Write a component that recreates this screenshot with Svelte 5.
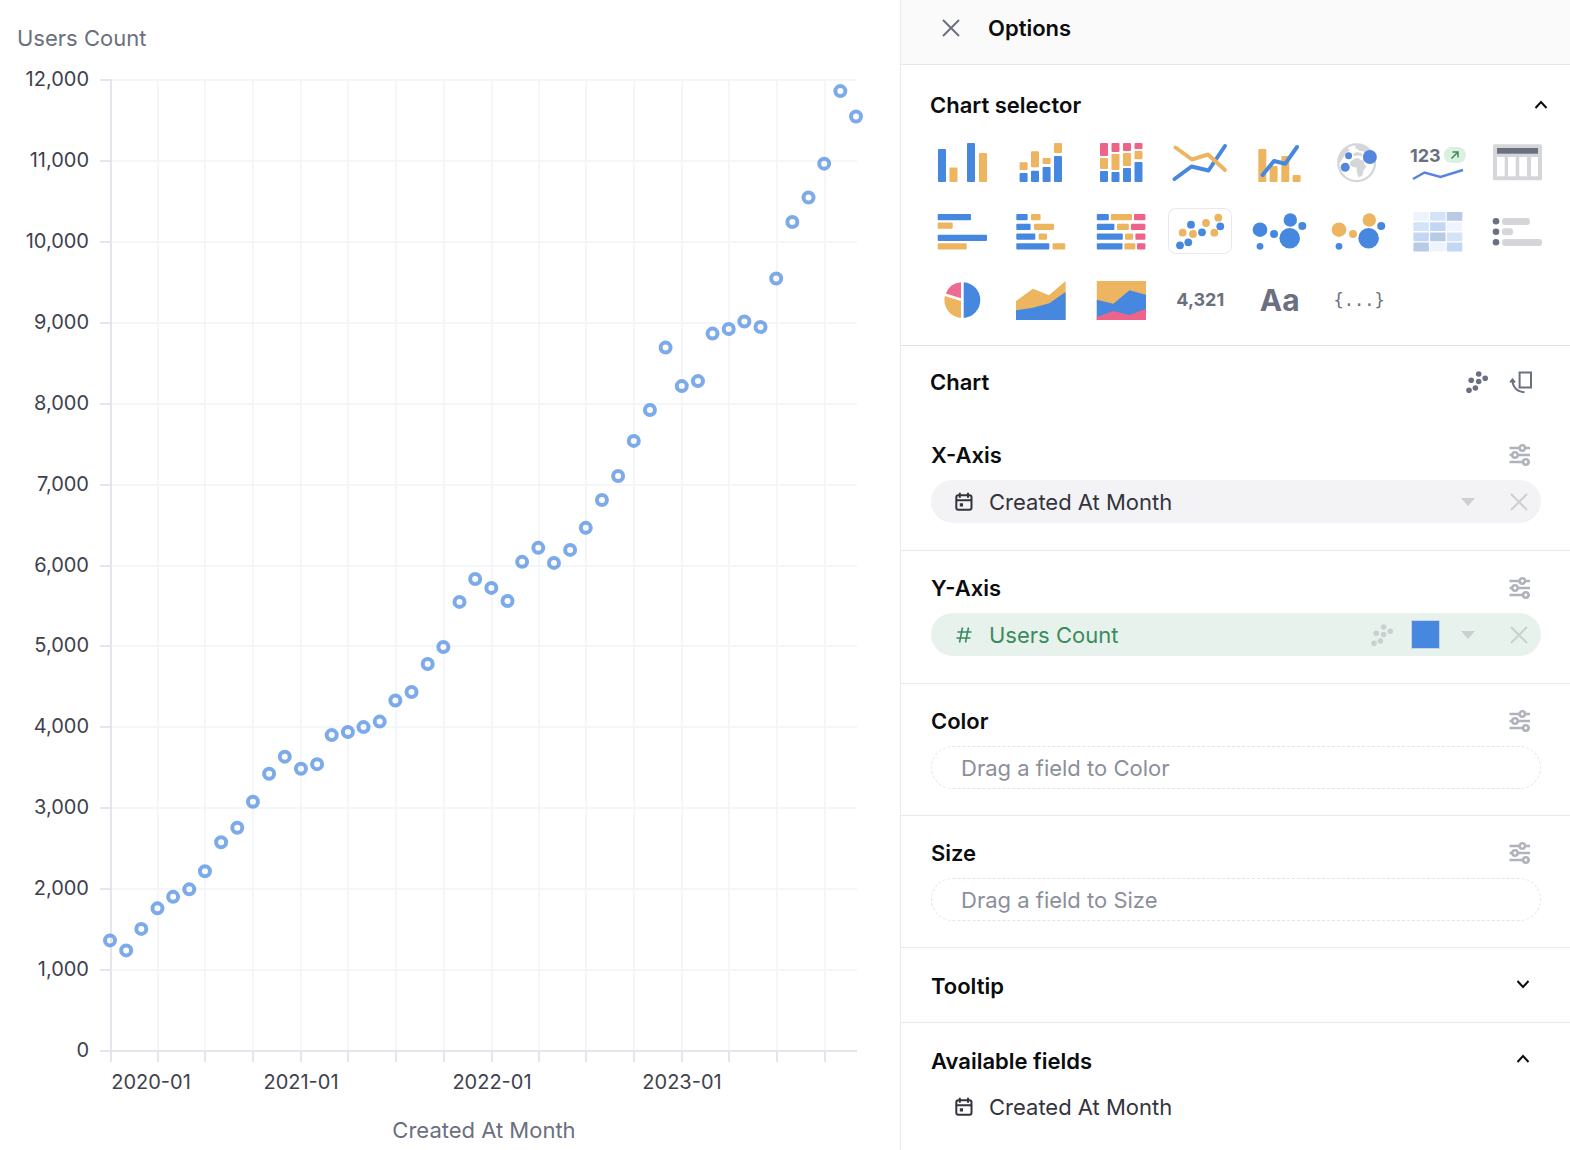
<script>
  const MONTHLY_USERS = [
    1367, 1243, 1509, 1763, 1905, 1998, 2221, 2580, 2759, 3081, 3427, 3638,
    3489, 3545, 3904, 3941, 4003, 4071, 4331, 4436, 4782, 4993, 5550, 5834,
    5723, 5562, 6045, 6218, 6032, 6193, 6465, 6810, 7107, 7540, 7922, 8693,
    8217, 8279, 8866, 8922, 9015, 8947, 9547, 10246, 10547, 10966, 11863, 11548
  ];

  const plot = { left: 110, right: 856, top: 80, bottom: 1051 };
  const start = Date.UTC(2020, 0, 1);
  const end = Date.UTC(2023, 11, 1);

  function monthX(month) {
    const t = Date.UTC(2020, month, 1);
    return plot.left + ((t - start) / (end - start)) * (plot.right - plot.left);
  }

  function valueY(value) {
    return plot.bottom - (value / 12000) * (plot.bottom - plot.top);
  }

  const points = MONTHLY_USERS.map((value, i) => ({ x: monthX(i), y: valueY(value) }));
  const yTicks = Array.from({ length: 13 }, (_, i) => i * 1000);
  const xTicks = Array.from({ length: 16 }, (_, i) => Math.floor(monthX(i * 3)) + 1);
  const xLabels = [
    { text: '2020-01', x: 151 },
    { text: '2021-01', x: 301 },
    { text: '2022-01', x: 492 },
    { text: '2023-01', x: 682 }
  ];

  const B = '#4688df';
  const O = '#edb55f';
  const P = '#ed6389';

  // rects are [x, y, width, height, color], dots are [x, y, radius, color]
  const charts = [
    { name: 'Column', rects: [[8, 10, 8, 33, B], [19.5, 28.5, 8, 14.5, O], [37, 4, 8, 39, B], [49, 14, 8, 29, O]] },
    {
      name: 'Stacked column',
      rects: [
        [10.6, 34, 8, 9, B], [22, 31.7, 8, 11.3, B], [33.6, 28, 8, 15, B], [45, 17, 8, 26, B],
        [10.6, 23.3, 8, 7.7, O], [22, 12.3, 8, 16, O], [33.6, 19, 8, 6, O], [45, 4, 8, 10, O]
      ]
    },
    {
      name: 'Stacked percentage column',
      rects: [
        [11, 32, 8, 11, B], [22.5, 33, 8, 10, B], [34, 29, 8, 14, B], [45.5, 23, 8, 20, B],
        [11, 19, 8, 11, O], [22.5, 15, 8, 16, O], [34, 14, 8, 13, O], [45.5, 12, 8, 8.3, O],
        [11, 4, 8, 13, P], [22.5, 4, 8, 9, P], [34, 4, 8, 8, P], [45.5, 4, 8, 6, P]
      ]
    },
    {
      name: 'Line',
      lines: [
        ['6.5 40 23.5 27.5 40.5 31.5 57 7', B],
        ['7.5 8.5 24 20.5 40 15.5 57 31', O]
      ]
    },
    {
      name: 'Column and line',
      rects: [[10.3, 10, 8, 33, O], [21.6, 27, 8, 16, O], [33.3, 17, 8, 26, O], [44.6, 36, 8, 7, O]],
      lines: [['14.6 36 26 22 37.3 24.7 49 8', B]]
    },
    { name: 'Map', kind: 'globe' },
    { name: 'KPI with trend', kind: 'kpi' },
    { name: 'Table', kind: 'table' },
    { name: 'Bar', rects: [[7.7, 6, 33.3, 6.3, B], [7.7, 14.5, 15, 6.3, O], [7.7, 26.8, 49.3, 6.3, B], [7.7, 35.3, 29, 6.3, O]] },
    {
      name: 'Stacked bar',
      rects: [
        [7.3, 6, 11.3, 6.3, B], [22, 6, 9.6, 6.3, O],
        [7.3, 15.8, 14.3, 6.3, B], [25, 15.8, 20, 6.3, O],
        [7.3, 25.5, 19, 6.3, B], [29.6, 25.5, 8.4, 6.3, O],
        [7.3, 35.3, 33, 6.3, B], [43.6, 35.3, 12.7, 6.3, O]
      ]
    },
    {
      name: 'Stacked percentage bar',
      rects: [
        [7.8, 6, 12, 6.3, B], [21.8, 6, 21.2, 6.3, O], [45, 6, 11.4, 6.3, P],
        [7.8, 15.8, 17.6, 6.3, B], [28, 15.8, 11.8, 6.3, O], [42, 15.8, 14.4, 6.3, P],
        [7.8, 25.5, 26, 6.3, B], [36, 25.5, 8, 6.3, O], [46.4, 25.5, 10, 6.3, P],
        [7.8, 35.3, 25.7, 6.3, B], [35.4, 35.3, 11, 6.3, O], [48, 35.3, 8.4, 6.3, P]
      ]
    },
    {
      name: 'Scatter',
      dots: [
        [12, 37.3, 3.9, B], [20.3, 34.3, 3.9, B], [23, 16.7, 3.9, B], [34, 24.3, 3.9, B], [52.3, 18.3, 3.9, B],
        [14.7, 24.7, 3.9, O], [25, 26, 3.9, O], [38, 15, 3.9, O], [46.3, 24.7, 3.9, O], [50.3, 9.7, 3.9, O]
      ]
    },
    {
      name: 'Bubble',
      dots: [
        [12, 21.7, 7.3, B], [12, 38.3, 3.4, B], [26, 26, 4, B],
        [42.3, 12, 6.7, B], [41.7, 30.3, 10.3, B], [54.3, 18, 4, B]
      ]
    },
    {
      name: 'Grouped bubble',
      dots: [
        [12, 21.7, 7.3, O], [12, 38.3, 3.4, B], [26, 26, 4, O],
        [42.3, 12, 6.7, O], [41.6, 30.3, 10.3, B], [54.2, 18, 4, B]
      ]
    },
    { name: 'Heatmap', kind: 'heatmap' },
    {
      name: 'List',
      dots: [[10, 13.3, 3.3, '#6b7080'], [10, 23.7, 3.3, '#6b7080'], [10, 34.3, 3.3, '#6b7080']],
      pills: [[16, 10, 28], [16, 20.3, 11], [16, 31, 40]]
    },
    { name: 'Pie', kind: 'pie' },
    {
      name: 'Area',
      areas: [
        ['7 43 7 24 24 11.7 40 18.3 56.6 4 56.6 43', O],
        ['7 43 7 33.3 24 30.7 40.3 26.3 56.6 15 56.6 43', B]
      ]
    },
    {
      name: 'Percentage area',
      areas: [
        ['7.8 4 57 4 57 43 7.8 43', O],
        ['7.8 43 7.8 22.7 24.4 26.7 40.4 13.3 57 17.7 57 43', B],
        ['7.8 43 7.8 40 24.4 34 40.4 38 57 31.7 57 43', P]
      ]
    },
    { name: 'Big number', kind: 'number', label: '4,321' },
    { name: 'Text', kind: 'text', label: 'Aa' },
    { name: 'Custom', kind: 'code', label: '{...}' }
  ];

  const heat = [
    ['#edf4fd', '#d3e4f8', '#b9cae5'],
    ['#d3e4f8', '#c3d7f4', '#edf4fd'],
    ['#c3d7f4', '#b9cae5', '#d3e4f8'],
    ['#b9cae5', '#edf4fd', '#c3d7f4']
  ];

  let selected = $state('Scatter');
  let selectorOpen = $state(true);
  let tooltipOpen = $state(false);
  let fieldsOpen = $state(true);
</script>

{#snippet chevron(open)}
  <svg class="chevron" width="14" height="10" viewBox="0 0 14 10" aria-hidden="true">
    <path d={open ? 'M1.5 8 7 2l5.5 6' : 'M1.5 2 7 8l5.5-6'} />
  </svg>
{/snippet}

{#snippet scatterIcon()}
  <svg width="24" height="24" viewBox="0 0 24 24" fill="currentColor" aria-hidden="true">
    <circle cx="13.7" cy="4" r="2.8" />
    <circle cx="20.2" cy="8.3" r="2.8" />
    <circle cx="6.2" cy="10.3" r="2.8" />
    <circle cx="13.7" cy="11.5" r="2.8" />
    <circle cx="10.4" cy="18" r="2.8" />
    <circle cx="4" cy="20.2" r="2.8" />
  </svg>
{/snippet}

{#snippet calendarIcon()}
  <svg class="field-icon" width="20" height="20" viewBox="0 0 20 20" aria-hidden="true">
    <rect x="2.3" y="3.3" width="15.2" height="14.4" rx="2" />
    <path d="M2.3 8.3h15.2M5.8.8v5M14 .8v5" />
    <rect x="6.3" y="11.8" width="2.2" height="2.2" fill="currentColor" stroke-width="1" />
  </svg>
{/snippet}

{#snippet settings(label)}
  <button class="settings" aria-label="{label} settings">
    <svg width="24" height="24" viewBox="0 0 24 24" aria-hidden="true">
      <path d="M1.5 5h10M17 5h5M1.5 12h3M10 12h12M1.5 19h13.500M20.500 19h1.500" />
      <circle cx="14.3" cy="5" r="2.7" />
      <circle cx="7" cy="12" r="2.7" />
      <circle cx="17.8" cy="19" r="2.7" />
    </svg>
  </button>
{/snippet}

{#snippet fieldEnd(label)}
  <button class="menu" aria-label="{label} menu">
    <svg width="14" height="8" viewBox="0 0 14 8" aria-hidden="true"><path d="M0 0h14L7 8z" fill="currentColor" /></svg>
  </button>
  <button class="remove" aria-label="Remove {label}">
    <svg width="18" height="18" viewBox="0 0 18 18" aria-hidden="true">
      <path d="M1 1l16 16M17 1 1 17" stroke="currentColor" stroke-width="2" />
    </svg>
  </button>
{/snippet}

<div class="explorer">
  <main>
    <svg class="chart" viewBox="0 0 900 1150" role="img" aria-label="Users Count by Created At Month">
      <g class="grid">
        {#each yTicks.slice(1) as tick}
          <line x1={plot.left + 1} x2={plot.right + 1} y1={Math.round(valueY(tick))} y2={Math.round(valueY(tick))} />
        {/each}
        {#each xTicks.slice(1) as x}
          <line x1={x} x2={x} y1={plot.top} y2={plot.bottom} />
        {/each}
      </g>
      <g class="axis">
        <line x1={plot.left + 1} x2={plot.left + 1} y1={plot.top - 1} y2={plot.bottom} />
        <line x1={plot.left} x2={plot.right + 1} y1={plot.bottom} y2={plot.bottom} />
        {#each yTicks as tick}
          <line x1="100" x2={plot.left} y1={Math.round(valueY(tick))} y2={Math.round(valueY(tick))} />
        {/each}
        {#each xTicks as x}
          <line x1={x} x2={x} y1={plot.bottom} y2={plot.bottom + 11} />
        {/each}
      </g>
      <g class="labels">
        {#each yTicks as tick}
          <text x="89" y={Math.round(valueY(tick)) + 6} text-anchor="end">{tick.toLocaleString('en-US')}</text>
        {/each}
        {#each xLabels as label}
          <text x={label.x} y="1089" text-anchor="middle">{label.text}</text>
        {/each}
      </g>
      <g class="titles">
        <text x="17" y="46">Users Count</text>
        <text x="484" y="1138" text-anchor="middle">Created At Month</text>
      </g>
      <g class="points">
        {#each points as point}
          <circle cx={point.x} cy={point.y} r="5" />
        {/each}
      </g>
    </svg>
  </main>

  <aside>
    <header>
      <button class="close" aria-label="Close options">
        <svg width="18" height="18" viewBox="0 0 18 18" aria-hidden="true">
          <path d="M1 1l16 16M17 1 1 17" stroke="currentColor" stroke-width="2" />
        </svg>
      </button>
      <h1>Options</h1>
    </header>

    <section class="selector">
      <button class="toggle" aria-expanded={selectorOpen} onclick={() => (selectorOpen = !selectorOpen)}>
        Chart selector
        {@render chevron(selectorOpen)}
      </button>
      {#if selectorOpen}
        <div class="types">
          {#each charts as chart}
            <button
              class="type {chart.label ? chart.kind : ''}"
              class:selected={selected === chart.name}
              aria-label={chart.name}
              onclick={() => (selected = chart.name)}
            >
              {#if chart.label}
                {chart.label}
              {:else}
                <svg width="64" height="46" viewBox="0 0 64 46" aria-hidden="true">
                  {#each chart.areas ?? [] as [pts, fill]}
                    <polygon points={pts} {fill} />
                  {/each}
                  {#each chart.rects ?? [] as [x, y, width, height, fill]}
                    <rect {x} {y} {width} {height} rx="1" {fill} />
                  {/each}
                  {#each chart.pills ?? [] as [x, y, width]}
                    <rect {x} {y} {width} height="7" rx="3" fill="#d5d6da" />
                  {/each}
                  {#each chart.lines ?? [] as [pts, stroke]}
                    <polyline points={pts} {stroke} fill="none" stroke-width="4" stroke-linejoin="round" stroke-linecap="round" />
                  {/each}
                  {#each chart.dots ?? [] as [cx, cy, r, fill]}
                    <circle {cx} {cy} {r} {fill} />
                  {/each}
                  {#if chart.kind === 'globe'}
                    <circle cx="29.6" cy="23.7" r="18.4" fill="#fff" stroke="#d5d6da" stroke-width="2.2" />
                    <g fill="#d5d6da">
                      <path d="M29 5.5c8-1.500 15 4 17 11l-7 2-2-6-5-1-4-3z" />
                      <path d="M11 22c1-6 4-11 9-13l3 2-4 3-3 5-3 5z" />
                      <path d="M26 14.500l4-1.500 4 1 2 3-5-.5-4 .5z" />
                      <path d="M23.5 22.500l4-3 4-.5 2 2 3 .5 1 4 2 2-3 4-1 5-4 2-1.500-5-.5-5-4-.5-3-3z" />
                    </g>
                    <g fill="#5585dd">
                      <circle cx="21.6" cy="16.7" r="3.5" />
                      <circle cx="18.2" cy="28.3" r="4.5" />
                      <circle cx="42.9" cy="18" r="7" />
                    </g>
                  {:else if chart.kind === 'kpi'}
                    <text x="3" y="23" class="kpi-value">123</text>
                    <rect x="36.7" y="8" width="22.3" height="16" rx="8" fill="#dcf0df" />
                    <path d="M44.5 19.500 51 13M45.5 13H51v5.5" fill="none" stroke="#3c8b5f" stroke-width="1.5" />
                    <polyline points="6 40 17.5 33.5 33.5 38 56 31" fill="none" stroke="#5585dd" stroke-width="2.5" />
                  {:else if chart.kind === 'table'}
                    <rect x="7" y="5.3" width="49" height="36" rx="1.5" fill="#d5d6da" />
                    <rect x="11" y="9" width="41" height="5.7" fill="#6b7080" />
                    {#each [11, 22, 33.3, 45] as x}
                      <rect {x} y="18" width={x === 45 ? 7 : 7.7} height="19.3" fill="#fff" />
                    {/each}
                  {:else if chart.kind === 'heatmap'}
                    {#each heat as row, r}
                      {#each row as fill, c}
                        <rect x={6.4 + c * 16.7} y={4 + r * 10.2} width="15.5" height="8.8" rx="0.5" {fill} />
                      {/each}
                    {/each}
                  {:else if chart.kind === 'pie'}
                    <path d="M33.700 5.2a17.900 17.900 0 0 1 0 35.700z" fill={B} />
                    <path d="M31 5.2v16L15.8 16.5A18 18 0 0 1 31 5.2z" fill="#ed6a93" />
                    <path d="M31 23.9v17A18 18 0 0 1 14.8 19z" fill={O} />
                  {/if}
                </svg>
              {/if}
            </button>
          {/each}
        </div>
      {/if}
    </section>

    <section>
      <div class="chart-head">
        <h2>Chart</h2>
        <button class="tool" aria-label="Change mark">{@render scatterIcon()}</button>
        <button class="tool" aria-label="Swap axes">
          <svg width="24" height="24" viewBox="0 0 24 24" fill="none" stroke="currentColor" stroke-width="2" aria-hidden="true">
            <rect x="10.6" y="2.5" width="11.4" height="15" />
            <path d="M3.500 10c0 7 4.500 12 12 12.200" />
            <path d="M1.200 12.300 3.500 9.500l2.500 2.800" />
          </svg>
        </button>
      </div>
      <div class="field filled">
        <h2>X-Axis</h2>
        {@render settings('X-Axis')}
        <div class="pill">
          {@render calendarIcon()}
          <span class="name">Created At Month</span>
          {@render fieldEnd('Created At Month')}
        </div>
      </div>
    </section>

    <section class="field filled">
      <h2>Y-Axis</h2>
      {@render settings('Y-Axis')}
      <div class="pill measure">
        <svg class="field-icon" width="20" height="20" viewBox="0 0 20 20" aria-hidden="true">
          <path d="M8.500 2.500 5.500 17.500M14.500 2.500l-3 15M3.500 7H17.500M2.500 13h14" stroke-width="1.6" />
        </svg>
        <span class="name">Users Count</span>
        <button class="mark" aria-label="Mark type">{@render scatterIcon()}</button>
        <button class="swatch" aria-label="Series color"></button>
        {@render fieldEnd('Users Count')}
      </div>
    </section>

    {#each ['Color', 'Size'] as slot}
      <section class="field">
        <h2>{slot}</h2>
        {@render settings(slot)}
        <div class="pill empty">Drag a field to {slot}</div>
      </section>
    {/each}

    <section class="tooltip">
      <button class="toggle" aria-expanded={tooltipOpen} onclick={() => (tooltipOpen = !tooltipOpen)}>
        Tooltip
        {@render chevron(tooltipOpen)}
      </button>
    </section>

    <section class="available">
      <button class="toggle" aria-expanded={fieldsOpen} onclick={() => (fieldsOpen = !fieldsOpen)}>
        Available fields
        {@render chevron(fieldsOpen)}
      </button>
      {#if fieldsOpen}
        <ul>
          <li>
            {@render calendarIcon()}
            <span class="name">Created At Month</span>
          </li>
        </ul>
      {/if}
    </section>
  </aside>
</div>

<style>
  .explorer {
    display: grid;
    grid-template-columns: minmax(0, 1fr) 670px;
    min-height: 100vh;
    background: #fff;
    color: #0b0c0e;
    font-family: Inter, 'Liberation Sans', sans-serif;
    font-size: 22px;
    line-height: 28px;
  }

  main {
    min-width: 0;
  }

  .chart {
    display: block;
    width: 100%;
  }

  .grid line {
    stroke: #f5f6f9;
    stroke-width: 2;
  }

  .axis line {
    stroke: #e4e6ed;
    stroke-width: 2;
  }

  .labels {
    font-size: 20px;
    fill: #3e424d;
  }

  .titles {
    fill: #6b7080;
  }

  .points circle {
    fill: none;
    stroke: #4688df;
    stroke-width: 4;
    opacity: 0.7;
  }

  aside {
    border-left: 1px solid #e8e9ee;
  }

  button {
    display: flex;
    align-items: center;
    justify-content: center;
    padding: 0;
    border: 0;
    background: none;
    color: inherit;
    font: inherit;
    cursor: pointer;
  }

  h1,
  h2 {
    margin: 0;
    font-size: 22px;
    font-weight: 600;
  }

  header {
    display: flex;
    align-items: center;
    gap: 28px;
    height: 56px;
    padding: 0 41px 8px;
    background: #fafafa;
    border-bottom: 1px solid #e6e7ec;
  }

  .close {
    color: #6b7080;
  }

  section {
    border-bottom: 1px solid #e8e9ee;
  }

  .toggle {
    justify-content: space-between;
    width: 100%;
    font-weight: 600;
  }

  .chevron path {
    fill: none;
    stroke: #0b0c0e;
    stroke-width: 2;
  }

  .selector {
    padding: 26px 20px 22px 29px;
    border-color: #e0e2ea;
  }

  .selector .toggle {
    padding-right: 2px;
  }

  .types {
    display: grid;
    grid-template-columns: repeat(8, 64px);
    justify-content: space-between;
    row-gap: 23px;
    margin-top: 20px;
  }

  .type {
    height: 46px;
    color: #6b7080;
    border-radius: 8px;
  }

  .type.selected {
    box-shadow: inset 0 0 0 1px #e8e9ee;
  }

  .number,
  .kpi-value {
    font-size: 18px;
    font-weight: 700;
  }

  .kpi-value {
    fill: #6b7080;
  }

  .text {
    font-size: 30px;
    font-weight: 700;
  }

  .code {
    font-family: 'DejaVu Sans Mono', monospace;
    font-size: 17px;
  }

  .chart-head {
    display: flex;
    align-items: center;
    gap: 20px;
    height: 72px;
    padding: 0 37px 0 29px;
  }

  .chart-head h2 {
    flex: 1;
  }

  .tool {
    color: #6b7080;
  }

  .field {
    display: grid;
    grid-template-columns: 1fr auto;
    align-items: center;
    row-gap: 11px;
    padding: 23px 29px 26px 30px;
  }

  .filled {
    padding-bottom: 27px;
  }

  .settings {
    margin-right: 9px;
    color: #b0b3bb;
  }

  .settings path,
  .settings circle {
    fill: none;
    stroke: currentColor;
    stroke-width: 2.5;
  }

  .pill {
    grid-column: 1 / -1;
    display: flex;
    align-items: center;
    box-sizing: border-box;
    height: 43px;
    padding: 0 13px 0 23px;
    border-radius: 22px;
    background: #f3f3f5;
    color: #33343d;
  }

  .name {
    flex: 1;
    margin-left: 15px;
  }

  .field-icon {
    fill: none;
    stroke: currentColor;
    stroke-width: 2;
  }

  .measure {
    background: #e8f2ec;
    color: #3c8b5f;
  }

  .empty {
    padding: 0 29px;
    border: 1px dashed #e3e4e9;
    background: none;
    color: #8b8f9b;
  }

  .menu,
  .remove,
  .mark {
    color: #cbcfd1;
  }

  .remove {
    margin-left: 35px;
  }

  .swatch {
    width: 29px;
    height: 29px;
    margin: 0 21px 0 17px;
    border: 1px solid #c9d3e4;
    background: #4688df;
  }

  .tooltip {
    padding: 24px 40px 22px 30px;
  }

  .available {
    padding: 24px 40px 0 30px;
    border: 0;
  }

  .tooltip .chevron,
  .available .chevron {
    margin-bottom: 4px;
  }

  ul {
    margin: 18px 0 0;
    padding: 0;
    list-style: none;
  }

  li {
    display: flex;
    align-items: center;
    padding-left: 23px;
    color: #33343d;
  }
</style>
